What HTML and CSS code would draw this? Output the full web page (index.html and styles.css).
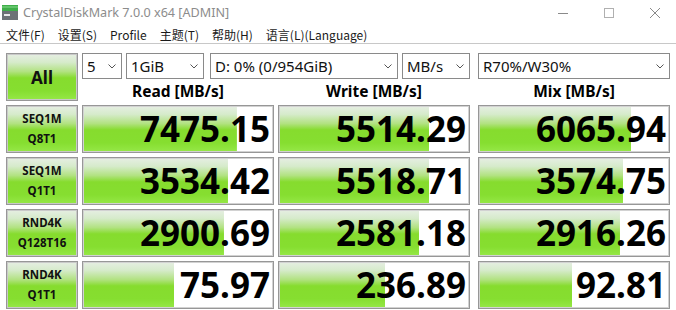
FILE: index.html
```html
<!DOCTYPE html>
<html lang="zh-CN">
<head>
    <meta charset="UTF-8">
    <title>CrystalDiskMark 7.0.0 x64 [ADMIN]</title>
    <link rel="stylesheet" href="styles.css">
</head>
<body>
    <div class="titlebar">
        <svg class="app-icon" width="16" height="15" viewBox="0 0 16 15">
            <rect x="0" y="0" width="16" height="6" fill="#3fae49"/>
            <rect x="0" y="1" width="16" height="2" fill="#62c46a"/>
            <rect x="0" y="6" width="16" height="9" fill="#6d7276"/>
            <rect x="2" y="9" width="6" height="2" fill="#e8e8e8"/>
        </svg>
        <span class="title">CrystalDiskMark 7.0.0 x64 [ADMIN]</span>
        <div class="win-ctl">
            <svg width="10" height="10" viewBox="0 0 10 10"><line x1="0" y1="5.5" x2="10" y2="5.5" stroke="#8a8a8a"/></svg>
            <svg width="10" height="10" viewBox="0 0 10 10"><rect x="0.5" y="0.5" width="9" height="9" fill="none" stroke="#b0b0b0"/></svg>
            <svg width="10" height="10" viewBox="0 0 10 10"><path d="M0 0L10 10M10 0L0 10" stroke="#8a8a8a"/></svg>
        </div>
    </div>

    <nav class="menubar">
        <span>文件(F)</span>
        <span>设置(S)</span>
        <span>Profile</span>
        <span>主题(T)</span>
        <span>帮助(H)</span>
        <span>语言(L)(Language)</span>
    </nav>

    <main class="bench">
        <div class="row">
            <button class="green-btn all">All</button>
            <div class="controls">
                <div class="combos">
                    <div class="combo w-count">5 <svg class="chev" width="8" height="5" viewBox="0 0 8 5"><polyline points="0.5,0.5 4,4 7.5,0.5" fill="none" stroke="#555"/></svg></div>
                    <div class="combo w-size">1GiB <svg class="chev" width="8" height="5" viewBox="0 0 8 5"><polyline points="0.5,0.5 4,4 7.5,0.5" fill="none" stroke="#555"/></svg></div>
                    <div class="combo w-drive">D: 0% (0/954GiB) <svg class="chev" width="8" height="5" viewBox="0 0 8 5"><polyline points="0.5,0.5 4,4 7.5,0.5" fill="none" stroke="#555"/></svg></div>
                    <div class="combo w-unit">MB/s <svg class="chev" width="8" height="5" viewBox="0 0 8 5"><polyline points="0.5,0.5 4,4 7.5,0.5" fill="none" stroke="#555"/></svg></div>
                    <div class="combo w-mix">R70%/W30% <svg class="chev" width="8" height="5" viewBox="0 0 8 5"><polyline points="0.5,0.5 4,4 7.5,0.5" fill="none" stroke="#555"/></svg></div>
                </div>
                <div class="heads">
                    <div class="head">Read [MB/s]</div>
                    <div class="head">Write [MB/s]</div>
                    <div class="head mix">Mix [MB/s]</div>
                </div>
            </div>
        </div>

        <div class="row">
            <button class="green-btn label">SEQ1M<br>Q8T1</button>
            <div class="cell" style="--fill: 81%">7475.15</div>
            <div class="cell" style="--fill: 79%">5514.29</div>
            <div class="cell mix" style="--fill: 80%">6065.94</div>
        </div>

        <div class="row">
            <button class="green-btn label">SEQ1M<br>Q1T1</button>
            <div class="cell" style="--fill: 76.3%">3534.42</div>
            <div class="cell" style="--fill: 79%">5518.71</div>
            <div class="cell mix" style="--fill: 75.8%">3574.75</div>
        </div>

        <div class="row">
            <button class="green-btn label">RND4K<br>Q128T16</button>
            <div class="cell" style="--fill: 74.2%">2900.69</div>
            <div class="cell" style="--fill: 73.7%">2581.18</div>
            <div class="cell mix" style="--fill: 74.2%">2916.26</div>
        </div>

        <div class="row">
            <button class="green-btn label">RND4K<br>Q1T1</button>
            <div class="cell" style="--fill: 48%">75.97</div>
            <div class="cell" style="--fill: 55.8%">236.89</div>
            <div class="cell mix" style="--fill: 49%">92.81</div>
        </div>
    </main>
</body>
</html>
```

FILE: styles.css
```css
/* Basic reset */
* {
    margin: 0;
    padding: 0;
    box-sizing: border-box;
}

body {
    width: 676px;
    height: 310px;
    overflow: hidden;
    background: #fff;
    font-family: 'Noto Sans', 'Noto Sans CJK SC', sans-serif;
    color: #000;
}

/* Window title */
.titlebar {
    height: 25px;
    display: flex;
    align-items: center;
    padding-left: 2px;
}

.app-icon {
    margin-right: 5px;
    margin-top: -1px;
}

.title {
    font-size: 12.6px;
    color: #8c8c8c;
}

.win-ctl {
    margin-left: auto;
    margin-right: 16px;
    display: flex;
    gap: 36px;
}

/* Menu */
.menubar {
    height: 19px;
    display: flex;
    align-items: center;
    gap: 13px;
    padding-left: 6px;
    border-bottom: 1px solid #c8c8c8;
    font-family: 'Noto Sans CJK SC', sans-serif;
    font-size: 12px;
    color: #1a1a1a;
}

/* Benchmark grid */
.bench {
    padding: 9px 6px 0 6px;
    display: flex;
    flex-direction: column;
    gap: 4px;
}

.row {
    display: flex;
    gap: 4px;
    height: 48px;
}

.green-btn {
    width: 72px;
    height: 48px;
    border: 1px solid #979797;
    box-shadow: inset 0 0 0 1px #c9c9c9;
    background: linear-gradient(180deg, #e6eee3 0%, #d6ebcb 18%, #b2e282 38%, #86dc2e 52%, #86de30 80%, #96e848 100%);
    font-family: 'Noto Sans', sans-serif;
    font-weight: bold;
    color: #111;
}

.all {
    font-size: 17px;
}

.label {
    font-size: 11.5px;
    line-height: 20px;
}

.controls {
    width: 588px;
    display: flex;
    flex-direction: column;
}

.combos {
    height: 26px;
    display: flex;
    gap: 4px;
}

.combo {
    height: 26px;
    border: 1px solid #8a8a8a;
    background: #fff;
    display: flex;
    align-items: center;
    justify-content: space-between;
    padding: 0 5px 0 4px;
    font-size: 15px;
    color: #111;
}

.w-count { width: 40px; }
.w-size { width: 78px; }
.w-drive { width: 188px; margin-left: 2px; }
.w-unit { width: 68px; }
.w-mix { width: 192px; margin-left: 4px; }

.chev {
    flex-shrink: 0;
}

.heads {
    height: 22px;
    display: flex;
    gap: 4px;
}

.head {
    width: 192px;
    text-align: center;
    font-size: 15.5px;
    font-weight: bold;
    line-height: 24px;
}

.mix {
    margin-left: 4px;
}

.cell {
    width: 192px;
    height: 48px;
    border: 1px solid #979797;
    box-shadow: inset 0 0 0 1px #d2d2d2;
    background-color: #fff;
    background-image: linear-gradient(180deg, #e6eee3 0%, #d6ebcb 18%, #b2e282 38%, #86dc2e 52%, #86de30 80%, #96e848 100%);
    background-repeat: no-repeat;
    background-size: var(--fill) 100%;
    text-align: right;
    padding-right: 3px;
    font-size: 35px;
    font-weight: bold;
    line-height: 46px;
}
```
